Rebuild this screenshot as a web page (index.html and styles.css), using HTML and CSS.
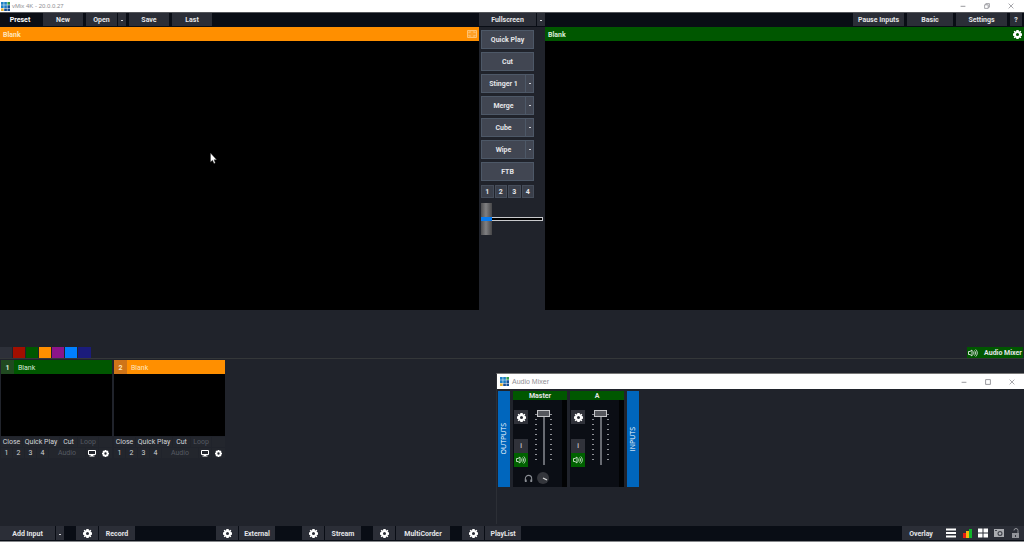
FILE: index.html
```html
<!DOCTYPE html>
<html lang="en">
<head>
<meta charset="utf-8">
<title>vMix 4K</title>
<link rel="stylesheet" href="styles.css">
</head>
<body>
<svg class="defs" aria-hidden="true">
  <symbol id="gear" viewBox="0 0 16 16"><path fill="currentColor" fill-rule="evenodd" d="M6 0h4l.5 2 1 .5L13.300 1.200 14.800 2.700 13.500 4.500l.5 1 2 .5v4l-2 .5-.5 1 1.300 1.800-1.500 1.500-1.800-1.300-1 .5-.5 2H6l-.5-2-1-.5-1.800 1.300-1.500-1.500 1.300-1.800-.5-1L0 10V6l2-.5.5-1L1.200 2.700 2.700 1.200l1.800 1.300 1-.5zM8 5.300a2.700 2.700 0 1 0 0 5.400 2.700 2.700 0 0 0 0-5.400z"/></symbol>
  <symbol id="logo" viewBox="0 0 9 9"><path fill="#1c7fc4" d="M0 0h2.700v2.700H0zM3.200 0h2.700v2.700H3.200zM3.200 3.200h2.700v2.700H3.200zM0 3.200h2.700v2.700H0z"/><path fill="#2f9a48" d="M6.400 0H9v2.700H6.400z"/><path fill="#174f92" d="M6.400 3.200H9v2.700H6.400zM3.200 6.400h2.700V9H3.200zM6.400 6.400H9V9H6.400z"/><path fill="#e3b23a" d="M0 6.400h2.700V9H0z"/></symbol>
  <symbol id="speaker" viewBox="0 0 20 16"><path fill="none" stroke="currentColor" stroke-width="1.800" d="M1 5h3l4-3v12l-4-3H1zM10.500 5c1.500 2 1.500 4 0 6M13 3c2.600 3 2.600 7 0 10M15.500 1c4 4 4 10 0 14"/></symbol>
  <symbol id="monitor" viewBox="0 0 16 14"><path fill="none" stroke="currentColor" stroke-width="2" d="M1 1h14v8H1z"/><path fill="currentColor" d="M6 9h4v2h3v2H3v-2h3z"/></symbol>
  <symbol id="min" viewBox="0 0 10 10"><path stroke="currentColor" stroke-width="1.400" d="M1 5.500h8"/></symbol>
  <symbol id="max" viewBox="0 0 10 10"><path fill="none" stroke="currentColor" stroke-width="1.400" d="M1 1h8v8H1z"/></symbol>
  <symbol id="restore" viewBox="0 0 10 10"><path fill="none" stroke="currentColor" stroke-width="1.200" d="M1 3h6v6H1zM3 3V1h6v6H7"/></symbol>
  <symbol id="x" viewBox="0 0 10 10"><path stroke="currentColor" stroke-width="1.200" d="M1 1l8 8M9 1L1 9"/></symbol>
  <symbol id="ticks" viewBox="0 0 17 54"><path stroke="#8d9096" stroke-width="2" stroke-dasharray="1 4" d="M1 4v50M16 4v50"/></symbol>
</svg>

<header class="titlebar">
  <svg class="logo"><use href="#logo"/></svg><span class="title">vMix 4K - 20.0.0.27</span>
  <span class="wincontrols">
    <button aria-label="Minimize"><svg><use href="#min"/></svg></button>
    <button aria-label="Restore"><svg><use href="#restore"/></svg></button>
    <button aria-label="Close"><svg><use href="#x"/></svg></button>
  </span>
</header>

<nav class="toolbar">
  <div class="group left">
    <button class="bar w-m current">Preset</button>
    <button class="bar w-m">New</button>
    <span class="split"><button class="bar w-s">Open</button><button class="bar caret" aria-label="Open menu"></button></span>
    <button class="bar w-m">Save</button>
    <button class="bar w-m">Last</button>
  </div>
  <span class="split"><button class="bar grow">Fullscreen</button><button class="bar caret" aria-label="Fullscreen menu"></button></span>
  <div class="group right">
    <button class="bar w-xl">Pause Inputs</button>
    <button class="bar w-l">Basic</button>
    <button class="bar w-xl">Settings</button>
    <button class="bar w-q">?</button>
  </div>
</nav>

<main class="stage">
  <section class="monitor">
    <h2 class="head orange"><span>Blank</span> <svg class="frame" viewBox="0 0 10 8"><path fill="currentColor" fill-opacity=".35" stroke="currentColor" d="M.5.500h9v7h-9z"/><path fill="none" stroke="currentColor" d="M2 3V2h2M6 2h2v1M2 5v1h2M6 6h2V5"/></svg></h2>
    <div class="video"></div>
  </section>
  <section class="mixcol">
    <button class="mix">Quick Play</button>
    <button class="mix">Cut</button>
    <span class="mixsplit"><button class="mix">Stinger 1</button><button class="mix arrow" aria-label="Stinger options"></button></span>
    <span class="mixsplit"><button class="mix">Merge</button><button class="mix arrow" aria-label="Merge options"></button></span>
    <span class="mixsplit"><button class="mix">Cube</button><button class="mix arrow" aria-label="Cube options"></button></span>
    <span class="mixsplit"><button class="mix">Wipe</button><button class="mix arrow" aria-label="Wipe options"></button></span>
    <button class="mix">FTB</button>
    <span class="nums"><button>1</button><button>2</button><button>3</button><button>4</button></span>
    <input class="tbar" type="range" value="0" aria-label="Transition">
  </section>
  <section class="monitor">
    <h2 class="head green"><span>Blank</span> <button class="headgear" aria-label="Output settings"><svg><use href="#gear"/></svg></button></h2>
    <div class="video"></div>
  </section>
</main>

<div class="tabs">
  <button class="tab c0" aria-label="All"></button><button class="tab c1" aria-label="Red"></button><button class="tab c2" aria-label="Green"></button><button class="tab c3" aria-label="Orange"></button><button class="tab c4" aria-label="Purple"></button><button class="tab c5" aria-label="Blue"></button><button class="tab c6" aria-label="Navy"></button>
  <button class="mixertoggle"><svg><use href="#speaker"/></svg><span>Audio Mixer</span></button>
</div>

<section class="inputs">
  <article class="input">
    <h3 class="inhead green"><span class="no">1</span><span>Blank</span></h3>
    <div class="thumb"></div>
    <div class="row words"><button>Close</button><button>Quick Play</button><button>Cut</button><button class="dim">Loop</button><span></span></div>
    <div class="row cells"><button>1</button><button>2</button><button>3</button><button>4</button><button class="dim">Audio</button><button aria-label="Output"><svg class="mon"><use href="#monitor"/></svg></button><button aria-label="Settings"><svg class="cog"><use href="#gear"/></svg></button></div>
  </article>
  <article class="input">
    <h3 class="inhead orange"><span class="no">2</span><span>Blank</span></h3>
    <div class="thumb"></div>
    <div class="row words"><button>Close</button><button>Quick Play</button><button>Cut</button><button class="dim">Loop</button><span></span></div>
    <div class="row cells"><button>1</button><button>2</button><button>3</button><button>4</button><button class="dim">Audio</button><button aria-label="Output"><svg class="mon"><use href="#monitor"/></svg></button><button aria-label="Settings"><svg class="cog"><use href="#gear"/></svg></button></div>
  </article>
</section>

<footer class="bottombar">
  <span class="split add"><button class="bar grow">Add Input</button><button class="bar caret" aria-label="Add input menu"></button></span>
  <span class="pair record"><button class="bar gearbtn" aria-label="Record settings"><svg><use href="#gear"/></svg></button><button class="bar w-f">Record</button></span>
  <span class="pair external"><button class="bar gearbtn" aria-label="External settings"><svg><use href="#gear"/></svg></button><button class="bar w-f">External</button></span>
  <span class="pair"><button class="bar gearbtn" aria-label="Stream settings"><svg><use href="#gear"/></svg></button><button class="bar w-f">Stream</button></span>
  <span class="pair"><button class="bar gearbtn" aria-label="MultiCorder settings"><svg><use href="#gear"/></svg></button><button class="bar w-c">MultiCorder</button></span>
  <span class="pair"><button class="bar gearbtn" aria-label="PlayList settings"><svg><use href="#gear"/></svg></button><button class="bar w-f">PlayList</button></span>
  <span class="tools">
    <button class="bar overlay">Overlay</button>
    <button class="bar tool" aria-label="List"><svg viewBox="0 0 10 10"><path stroke="#fff" stroke-width="2" d="M0 1.500h10M0 5h10M0 8.500h10"/></svg></button>
    <button class="bar tool" aria-label="Levels"><svg viewBox="0 0 10 10"><path fill="#e51e12" d="M1 5h3v5H1z"/><path fill="#f3b70c" d="M4 3h3v7H4z"/><path fill="#10b52a" d="M7 1h3v9H7z"/></svg></button>
    <button class="bar tool" aria-label="Grid"><svg viewBox="0 0 10 10"><path fill="#fff" d="M0 .5h4.500v4H0zM5.500.500H10v4H5.500zM0 5.500h4.500v4H0zM5.500 5.500H10v4H5.500z"/></svg></button>
    <button class="bar tool" aria-label="Snapshot"><svg viewBox="0 0 10 10"><path fill="#a9abb0" d="M0 1h10v8H0z"/><path fill="#42454d" d="M1 3h2V2H1z"/><circle cx="6" cy="5.500" r="2.500" fill="#42454d"/><circle cx="6" cy="5.500" r="1.300" fill="#b9bbc0"/></svg></button>
    <button class="bar tool" aria-label="Lock"><svg viewBox="0 0 10 10"><path fill="#92949a" d="M2 5h7v5H2z"/><path fill="none" stroke="#92949a" d="M4 2.500a2 2 0 0 1 4 0V5"/><path fill="#33363e" d="M5 7h1v2H5z"/></svg></button>
  </span>
</footer>

<aside class="mixer">
  <header class="mixtitle">
    <svg class="logo"><use href="#logo"/></svg><span class="title">Audio Mixer</span>
    <span class="wincontrols">
      <button aria-label="Minimize"><svg><use href="#min"/></svg></button>
      <button aria-label="Maximize"><svg><use href="#max"/></svg></button>
      <button aria-label="Close"><svg><use href="#x"/></svg></button>
    </span>
  </header>
  <div class="channels">
    <div class="rail"><span>OUTPUTS</span></div>
    <section class="channel">
      <h4>Master</h4>
      <div class="chbody">
        <div class="chbtns"><button aria-label="Settings"><svg class="cog"><use href="#gear"/></svg></button><button class="info">i</button><button class="on" aria-label="Mute"><svg class="spk"><use href="#speaker"/></svg></button></div>
        <div class="fader"><svg class="ticks"><use href="#ticks"/></svg><input type="range" value="100" aria-label="Master volume"></div>
      </div>
      <div class="phones"><svg class="hp" viewBox="0 0 10 10"><path fill="none" stroke="#8b8e94" stroke-width="1.200" d="M1.500 8V5a3.500 3.500 0 0 1 7 0v3"/><path fill="#8b8e94" d="M1 6h2v3H1zM7 6h2v3H7z"/></svg><svg class="dial" viewBox="0 0 12 12"><circle cx="6" cy="6" r="6" fill="#34363c"/><path stroke="#ddd" stroke-width="1.300" d="M6 6l4 2"/></svg></div>
    </section>
    <section class="channel">
      <h4>A</h4>
      <div class="chbody">
        <div class="chbtns"><button aria-label="Settings"><svg class="cog"><use href="#gear"/></svg></button><button class="info">i</button><button class="on" aria-label="Mute"><svg class="spk"><use href="#speaker"/></svg></button></div>
        <div class="fader"><svg class="ticks"><use href="#ticks"/></svg><input type="range" value="100" aria-label="A volume"></div>
      </div>
    </section>
    <div class="rail"><span>INPUTS</span></div>
  </div>
</aside>

<svg class="cursor" viewBox="0 0 7 11"><path fill="#fff" stroke="#333" stroke-width=".4" d="M.5 0v9l2-1.700L4 10.600l1.300-.6L4 6.800h2.600z"/></svg>
</body>
</html>
```
FILE: styles.css
```css
* { box-sizing: border-box; }
body {
  margin: 0;
  min-height: 100vh;
  display: flex;
  flex-direction: column;
  background: #20232b;
  color: #e4e5e8;
  font: 7px/9px Roboto, "Liberation Sans", sans-serif;
  position: relative;
  overflow: hidden;
}
button {
  appearance: none;
  border: 0;
  margin: 0;
  padding: 0;
  background: none;
  color: inherit;
  font: inherit;
  white-space: nowrap;
  display: flex;
  align-items: center;
  justify-content: center;
}
h2, h3, h4 { margin: 0; font: inherit; }
svg { display: block; flex: none; }
.defs { position: absolute; width: 0; height: 0; }

.titlebar, .mixtitle {
  display: flex;
  align-items: center;
  background: #fff;
  color: #8f8f94;
}
.titlebar { height: 13px; padding-left: 1px; border-bottom: 1px solid #55575c; }
.logo { width: 9px; height: 9px; }
.title { margin-left: 2px; font: 7px/9px "Liberation Sans", Arial, sans-serif; }
.titlebar .title { font-size: 6px; }
.wincontrols { margin-left: auto; display: flex; gap: 2px; color: #85858c; }
.wincontrols button { width: 22px; height: 11px; }
.wincontrols svg { width: 6px; height: 6px; }
.titlebar .wincontrols { padding-right: 2px; }

.toolbar {
  display: grid;
  grid-template-columns: 1fr 66px 1fr;
  height: 14px;
  padding-bottom: 1px;
  background: #090d15;
  font-weight: bold;
}
.group { display: flex; gap: 3px; }
.group.right { justify-content: flex-end; padding-right: 2px; }
.bar { background: #2b2e37; height: 100%; padding-top: 2px; }
.bar.current { background: #0b0e15; color: #fff; }
.split { display: flex; gap: 1px; }
.w-s { width: 31px; }
.w-m { width: 40px; }
.w-l { width: 46px; }
.w-xl { width: 51px; }
.w-q { width: 12px; }
.grow { flex: 1; }
.caret { width: 8px; }
.caret::after, .arrow::after {
  content: "";
  width: 2px;
  height: 1px;
  background: #d4d5d9;
}

.stage { display: grid; grid-template-columns: 1fr 66px 1fr; }
.head {
  height: 14px;
  padding: 0 2px 0 3px;
  display: flex;
  align-items: center;
  justify-content: space-between;
  font-weight: bold;
}
.head span, .inhead span, .mixertoggle span { padding-top: 2px; }
.orange { background: #ff8f00; color: #ffe5bd; }
.green { background: #005700; color: #d8ead8; }
.frame { width: 10px; height: 8px; opacity: .6; }
.headgear svg { width: 9px; height: 9px; color: #fff; }
.video { aspect-ratio: 16 / 9; background: #000; }

.mixcol {
  display: flex;
  flex-direction: column;
  gap: 3px;
  padding: 3px 11px 0 2px;
  font-weight: bold;
}
.mix {
  height: 19px;
  width: 100%;
  padding-top: 1px;
  background: #414652;
  border: 1px solid #4d5867;
}
.mixsplit { display: flex; }
.mixsplit .mix:first-child { flex: 1; }
.mixsplit .arrow { width: 8px; border-left: 0; padding: 0; }
.nums { display: grid; grid-template-columns: repeat(4, 1fr); gap: 1px; height: 13px; margin-top: 1px; }
.nums button { background: #3a3f4a; border: 1px solid #454d5a; padding-top: 2px; }
.tbar {
  appearance: none;
  width: 62px;
  height: 32px;
  margin: 2px 0 0;
  background: none;
}
.tbar::-webkit-slider-runnable-track {
  height: 4px;
  background: #000;
  border: 1px solid #c9cacd;
}
.tbar::-webkit-slider-thumb {
  appearance: none;
  width: 11px;
  height: 32px;
  margin: -15px 0 0 -1px;
  background: linear-gradient(transparent 14px, #087cf2 14px 18px, transparent 18px), linear-gradient(90deg, #4e4e50, #808082 45%, #464648);
}

.tabs {
  display: flex;
  height: 12px;
  margin-top: 37px;
  padding-right: 1px;
  border-bottom: 1px solid #343739;
}
.tab { width: 13px; height: 11px; border-right: 1px solid #20232b; }
.c0 { background: #2d3039; }
.c1 { background: #a20f00; }
.c2 { background: #005700; }
.c3 { background: #ff8f00; }
.c4 { background: #8b1589; }
.c5 { background: #0080ff; }
.c6 { background: #1b1c7b; width: 14px; }
.mixertoggle { margin-left: auto; width: 56px; background: #005700; font-weight: bold; gap: 6px; }
.mixertoggle svg { width: 10px; height: 8px; }

.inputs { flex: 1; display: flex; gap: 2px; padding: 1px; align-items: flex-start; color: #d2d4d8; }
.input { width: 111px; }
.inhead { display: flex; align-items: center; height: 14px; gap: 4px; }
.no { width: 13px; height: 14px; display: grid; place-items: center; background: #204920; font-weight: bold; }
.orange .no { background: #cf7418; }
.thumb { height: 62px; background: #000; margin-bottom: 1px; }
.row { display: grid; gap: 1px; margin-bottom: 1px; }
.row > * { height: 10px; background: #23262d; }
.words { grid-template-columns: 21px 36px 17px 20px 1fr; }
.cells { grid-template-columns: 11px 11px 11px 11px 36px 12px 1fr; }
.dim { color: #555962; }
.mon { width: 8px; height: 7px; color: #fff; }
.cog { width: 9px; height: 9px; color: #fff; }
.input .cog { width: 7px; height: 7px; }

.bottombar {
  display: flex;
  height: 16px;
  padding-bottom: 1px;
  background: #090d15;
  border-bottom: 1px solid #85878a;
  font-weight: bold;
}
.add { width: 64px; margin-right: 12px; }
.pair { display: flex; gap: 1px; margin-right: 12px; }
.record { margin-right: 81px; }
.external { margin-right: 27px; }
.gearbtn { width: 22px; padding: 0; }
.gearbtn svg { width: 9px; height: 9px; color: #fff; }
.w-f { width: 36px; }
.w-c { width: 54px; }
.tools { display: flex; margin-left: auto; background: #2b2e37; padding-right: 1px; }
.overlay { width: 38px; margin-right: 3px; }
.tool { width: 16px; padding: 0; }
.tool svg { width: 10px; height: 10px; }

.mixer {
  position: absolute;
  left: 496px;
  right: 0;
  top: 373px;
  height: 151px;
  background: #20232b;
  border-left: 1px solid #2c2f36;
  border-top: 1px solid #777;
}
.mixtitle { height: 15px; padding-left: 3px; }
.mixer .title { margin-left: 3px; }
.mixer .wincontrols { padding-right: 1px; }
.channels { display: flex; gap: 3px; padding: 2px 0 0 1px; height: 98px; }
.rail { width: 12px; background: #0066bd; display: grid; place-items: center; color: #fff; }
.rail span { writing-mode: vertical-rl; transform: rotate(180deg); font: 7px/10px "Open Sans", sans-serif; }
.channel { width: 54px; background: #0b0e15; border-right: 5px solid #020304; }
.channel h4 { background: #005700; height: 9px; margin-right: -5px; text-align: center; font-weight: bold; line-height: 10px; }
.chbody { display: flex; gap: 7px; padding: 10px 0 0 1px; }
.chbtns { width: 14px; display: flex; flex-direction: column; }
.chbtns button { height: 14px; background: #30323a; }
.chbtns .info { margin-top: 15px; }
.chbtns .on { background: #006100; color: #cfe3cf; }
.spk { width: 10px; height: 8px; }
.fader { display: grid; width: 17px; height: 57px; justify-items: center; }
.fader > * { grid-area: 1 / 1; }
.ticks { width: 17px; height: 54px; }
.fader input {
  appearance: none;
  writing-mode: vertical-lr;
  direction: rtl;
  width: 13px;
  height: 55px;
  margin: 0;
  background: linear-gradient(90deg, transparent 6px, #686b72 6px 8px, transparent 8px);
}
.fader input::-webkit-slider-thumb {
  appearance: none;
  width: 13px;
  height: 7px;
  background: #55575d;
  border: 1px solid #c4c5c8;
}
.phones { display: flex; align-items: center; gap: 4px; padding: 5px 0 0 11px; }
.hp { width: 9px; height: 9px; }
.dial { width: 12px; height: 12px; }

.cursor { position: absolute; left: 210px; top: 153px; width: 7px; height: 11px; }
```
